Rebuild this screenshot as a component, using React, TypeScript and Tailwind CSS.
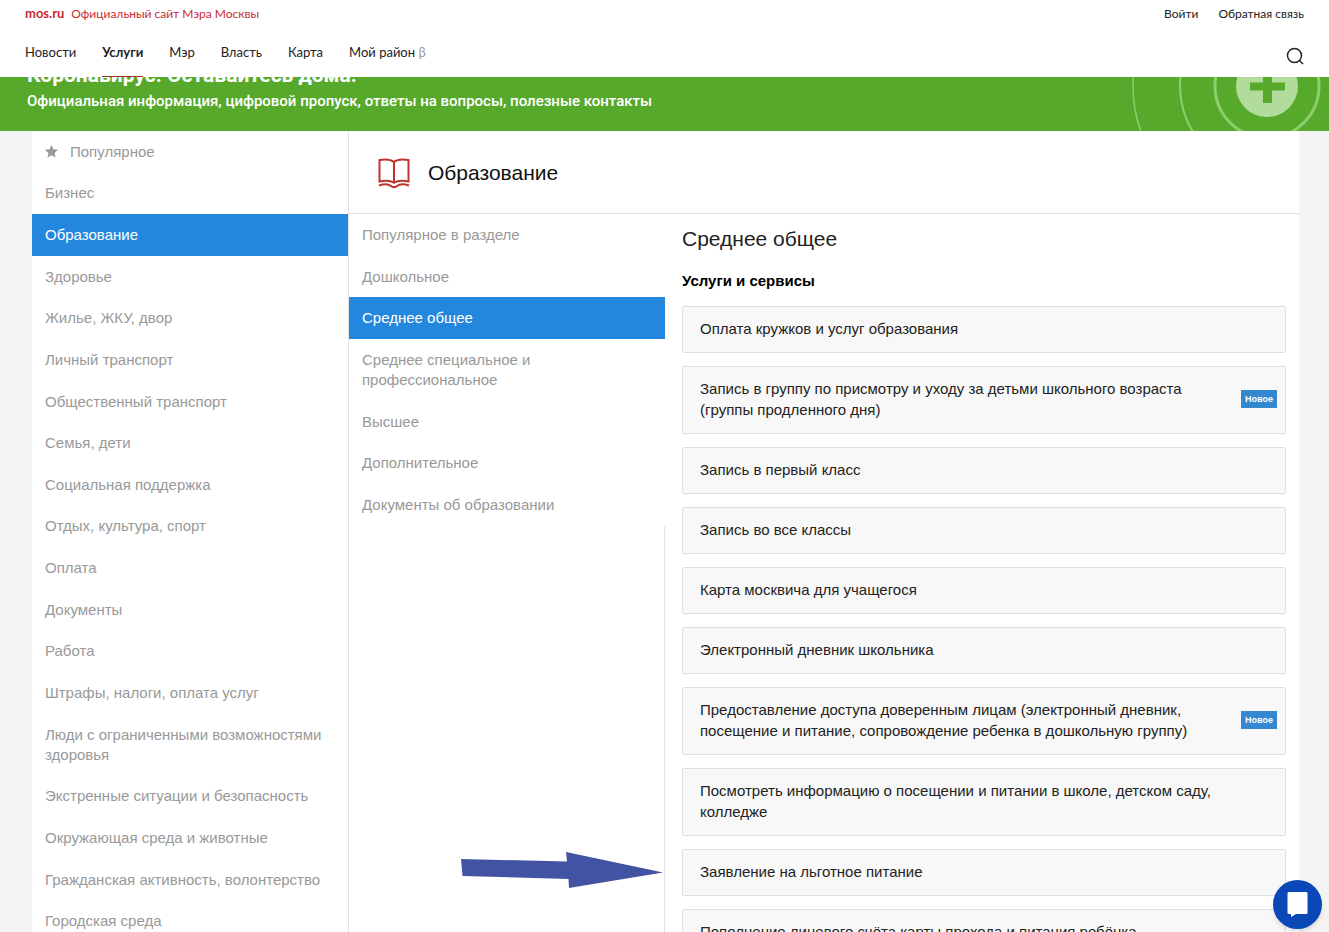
import React from 'react';
import clsx from 'clsx';

interface Service {
  title: string;
  isNew?: boolean;
}

const topMenu = ['Новости', 'Услуги', 'Мэр', 'Власть', 'Карта'];

const categories = [
  'Популярное',
  'Бизнес',
  'Образование',
  'Здоровье',
  'Жилье, ЖКУ, двор',
  'Личный транспорт',
  'Общественный транспорт',
  'Семья, дети',
  'Социальная поддержка',
  'Отдых, культура, спорт',
  'Оплата',
  'Документы',
  'Работа',
  'Штрафы, налоги, оплата услуг',
  'Люди с ограниченными возможностями здоровья',
  'Экстренные ситуации и безопасность',
  'Окружающая среда и животные',
  'Гражданская активность, волонтерство',
  'Городская среда',
];

const sections = [
  'Популярное в разделе',
  'Дошкольное',
  'Среднее общее',
  'Среднее специальное и профессиональное',
  'Высшее',
  'Дополнительное',
  'Документы об образовании',
];

const services: Service[] = [
  { title: 'Оплата кружков и услуг образования' },
  { title: 'Запись в группу по присмотру и уходу за детьми школьного возраста (группы продленного дня)', isNew: true },
  { title: 'Запись в первый класс' },
  { title: 'Запись во все классы' },
  { title: 'Карта москвича для учащегося' },
  { title: 'Электронный дневник школьника' },
  {
    title: 'Предоставление доступа доверенным лицам (электронный дневник, посещение и питание, сопровождение ребенка в дошкольную группу)',
    isNew: true,
  },
  { title: 'Посмотреть информацию о посещении и питании в школе, детском саду, колледже' },
  { title: 'Заявление на льготное питание' },
  { title: 'Пополнение лицевого счёта карты прохода и питания ребёнка' },
];

function StarIcon() {
  return (
    <svg className="mr-3 h-[13px] w-[13px] shrink-0" viewBox="0 0 24 24" fill="currentColor" aria-hidden="true">
      <path d="M12 0l3.6 8 8.4.9-6.3 5.8 1.8 8.6L12 19l-7.500 4.300 1.800-8.600L0 8.900 8.400 8z" />
    </svg>
  );
}

function BookIcon() {
  return (
    <svg className="h-[30px] w-8 text-[#c0342f]" viewBox="0 0 32 30" fill="none" stroke="currentColor" strokeWidth="2" aria-hidden="true">
      <path d="M16 4C13 1.500 7 1 1.500 2v21.500c5.500-1.200 11-1 14.500 1.200 3.500-2.200 9-2.400 14.500-1.200V2C25 1 19 1.500 16 4z" />
      <path d="M16 4V24" />
      <path d="M1 27.500c5-1.700 10-1.200 12.500.8 1.500 1 3.500 1 5 0C21 26.300 26 25.800 31 27.500" />
    </svg>
  );
}

function BannerArt() {
  return (
    <svg className="h-[54px] w-[200px] shrink-0" viewBox="0 0 200 54" fill="none" aria-hidden="true">
      <g stroke="#8fce6c">
        <circle cx="138" cy="9" r="134" strokeWidth="1.500" />
        <circle cx="138" cy="9" r="87" strokeWidth="2" />
        <circle cx="138" cy="9" r="52" strokeWidth="3" />
      </g>
      <circle cx="138" cy="9" r="31" fill="#b1dc9b" />
      <path d="M134 -8h9v13.500h13v8h-13V26h-9V13.500h-13v-8h13z" fill="#57a92b" />
    </svg>
  );
}

function Header() {
  return (
    <header className="h-[77px] shrink-0 bg-white px-[25px] font-[Lato,sans-serif] text-[#222]">
      <div className="flex h-7 items-center justify-between text-xs">
        <a href="#" className="flex items-center gap-[7px] text-[#cb2a33]">
          <b className="text-[13px]">mos.ru</b>
          <span>Официальный сайт Мэра Москвы</span>
        </a>
        <div className="flex gap-5">
          <a href="#">Войти</a>
          <a href="#">Обратная связь</a>
        </div>
      </div>
      <div className="flex h-[49px] justify-between">
        <nav className="flex gap-[26px] text-[13px] leading-[49px]">
          {topMenu.map((item) => (
            <a key={item} href="#" className={clsx(item === 'Услуги' && 'border-b border-[#a3301f] font-bold')}>
              {item}
            </a>
          ))}
          <a href="#">
            Мой район <span className="text-[#999]">β</span>
          </a>
        </nav>
        <button type="button" aria-label="Поиск" className="flex items-center pt-[7px]">
          <svg className="h-[18px] w-[18px]" viewBox="0 0 18 18" fill="none" stroke="currentColor" strokeWidth="1.500">
            <circle cx="8.500" cy="8.500" r="7" />
            <path d="M13.500 13.500L17 17" />
          </svg>
        </button>
      </div>
    </header>
  );
}

function Banner() {
  return (
    <a href="#" className="flex h-[54px] shrink-0 justify-between overflow-hidden bg-[#57a92b] pl-[27px] text-white">
      <div className="flex flex-col justify-end pb-[18px] font-[Roboto,sans-serif]">
        <p className="text-[21px] leading-7 font-bold">Коронавирус. Оставайтесь дома!</p>
        <p className="text-[15px] leading-6 font-medium">
          Официальная информация, цифровой пропуск, ответы на вопросы, полезные контакты
        </p>
      </div>
      <BannerArt />
    </a>
  );
}

interface MenuItemProps {
  label: string;
  active: boolean;
  starred?: boolean;
}

function MenuItem({ label, active, starred }: MenuItemProps) {
  return (
    <li className="flex">
      <a
        href="#"
        className={clsx(
          'flex w-full items-center px-[13px] py-[10px] leading-5',
          active ? 'bg-[#2388dd] text-white' : 'text-[#999]'
        )}
      >
        {starred && <StarIcon />}
        {label}
      </a>
    </li>
  );
}

function ServiceCard({ title, isNew }: Service) {
  return (
    <li>
      <a
        href="#"
        className="flex items-center justify-between rounded-[2px] border border-[#dfdfdf] bg-[#f8f8f8] pt-[11px] pr-2 pb-[13px] pl-[17px] leading-[21px] text-[#222]"
      >
        <span className="max-w-[520px]">{title}</span>
        {isNew && <span className="bg-[#3488cf] px-1 text-[9px] leading-[18px] font-bold text-white">Новое</span>}
      </a>
    </li>
  );
}

export default function App() {
  return (
    <div className="relative flex h-screen flex-col overflow-hidden bg-[#f4f4f4] font-['Liberation_Sans',Arial,sans-serif] text-[15px]">
      <Header />
      <Banner />

      <main className="mr-[30px] ml-8 flex min-h-0 flex-1 bg-white">
        <nav className="w-[317px] shrink-0 border-r border-[#e2e2e2]">
          <ul className="grid min-h-[811px]">
            {categories.map((label, i) => (
              <MenuItem key={label} label={label} active={label === 'Образование'} starred={i === 0} />
            ))}
          </ul>
        </nav>

        <div className="flex min-w-0 flex-1 flex-col">
          <div className="flex h-[83px] shrink-0 items-center gap-[18px] border-b border-[#e0e0e0] pt-px pl-[29px]">
            <BookIcon />
            <h1 className="text-[21px] text-[#111]">Образование</h1>
          </div>

          <div className="flex min-h-0 flex-1">
            <nav className="flex w-[316px] shrink-0 flex-col">
              <ul className="grid min-h-[312px]">
                {sections.map((label) => (
                  <MenuItem key={label} label={label} active={label === 'Среднее общее'} />
                ))}
              </ul>
              <div className="flex-1 border-r border-[#e2e2e2]" />
            </nav>

            <section className="min-w-0 flex-1 pr-[13px] pl-[17px]">
              <h2 className="mt-[11px] text-[21px] leading-7 text-[#222]">Среднее общее</h2>
              <h3 className="mt-[18px] mb-[15px] leading-5 font-bold text-black">Услуги и сервисы</h3>
              <ul className="flex flex-col gap-[13px]">
                {services.map((service) => (
                  <ServiceCard key={service.title} {...service} />
                ))}
              </ul>
            </section>
          </div>
        </div>
      </main>

      {/* Pointer to the meal application */}
      <svg className="absolute top-[851px] left-[460px] h-[38px] w-[204px]" viewBox="0 0 204 38" fill="#4353a4" aria-hidden="true">
        <path d="M1 8L107 10.500 106 1 203 21.500 109 37 108.500 28 2.500 25z" />
      </svg>

      <button
        type="button"
        aria-label="Открыть чат"
        className="absolute right-[7px] bottom-[3px] flex h-[49px] w-[49px] items-center justify-center rounded-full bg-[#0a48b8] shadow-md"
      >
        <svg className="h-[25px] w-[21px]" viewBox="0 0 21 25" fill="#fff">
          <path d="M1.500 0h18L20.500 1v20.500L19.500 22H9l-5 3v-3H1.500L.5 21V1z" />
        </svg>
      </button>
    </div>
  );
}
